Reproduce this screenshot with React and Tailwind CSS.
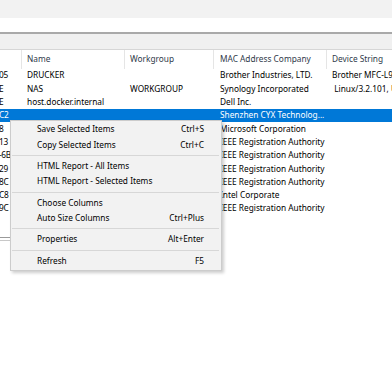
import React from "react";

const rows = [
  { a: "05", name: "DRUCKER", wg: "", mac: "Brother Industries, LTD.", dev: "Brother MFC-L9570CDW series" },
  { a: "E", name: "NAS", wg: "WORKGROUP", mac: "Synology Incorporated", dev: " Linux/3.2.101, UPnP/1.0, Portable SDK" },
  { a: "E", name: "host.docker.internal", wg: "", mac: "Dell Inc.", dev: "" },
  { a: "C2", name: "", wg: "", mac: "Shenzhen CYX Technolog...", dev: "", sel: true },
  { a: "8", name: "", wg: "", mac: "Microsoft Corporation", dev: "" },
  { a: "13", name: "", wg: "", mac: "IEEE Registration Authority", dev: "" },
  { a: "-6B", name: "", wg: "", mac: "IEEE Registration Authority", dev: "" },
  { a: "29", name: "", wg: "", mac: "IEEE Registration Authority", dev: "" },
  { a: "8C", name: "", wg: "", mac: "IEEE Registration Authority", dev: "" },
  { a: "C8", name: "", wg: "", mac: "Intel Corporate", dev: "" },
  { a: "9C", name: "", wg: "", mac: "IEEE Registration Authority", dev: "" },
];

const menu = [
  { t: "Save Selected Items", k: "Ctrl+S" },
  { t: "Copy Selected Items", k: "Ctrl+C" },
  "sep",
  { t: "HTML Report - All Items", k: "" },
  { t: "HTML Report - Selected Items", k: "" },
  "sep",
  { t: "Choose Columns", k: "" },
  { t: "Auto Size Columns", k: "Ctrl+Plus" },
  "sep",
  { t: "Properties", k: "Alt+Enter" },
  "sep",
  { t: "Refresh", k: "F5" },
];

export default function App() {
  return (
    <div
      className="relative w-[392px] h-[392px] overflow-hidden bg-white text-black"
      style={{ fontFamily: '"Noto Sans", "Segoe UI", sans-serif' }}
    >
      <div className="h-[18px] bg-[#f2f2f2]" />
      <div className="h-[14px] bg-white" />
      <div className="h-[2px] bg-[#a9a9a9]" />
      <div className="h-[16px] bg-[#f0f0f0] border-b border-[#d6d6d6]" />
      {/* header */}
      <div className="flex h-[19px] items-center text-[8.3px] text-[#2f3a4a] whitespace-nowrap">
        <div className="w-[22px] h-full border-r border-[#e5e5e5]" />
        <div className="w-[103px] h-full flex items-center pl-[5px] border-r border-[#e5e5e5]">Name</div>
        <div className="w-[89px] h-full flex items-center pl-[5px] border-r border-[#e5e5e5]">Workgroup</div>
        <div className="w-[113px] h-full flex items-center pl-[6px] border-r border-[#e5e5e5]">MAC Address Company</div>
        <div className="flex-1 h-full flex items-center pl-[5px]">Device String</div>
      </div>
      {/* rows */}
      <div className="flex flex-col text-[8.3px] whitespace-nowrap">
        {rows.map((r, i) => (
          <div
            key={i}
            className={
              "flex h-[13.3px] items-center " +
              (r.sel ? "bg-[#0078d7] text-white" : "text-black")
            }
          >
            <div className="w-[22px] overflow-hidden tracking-[-0.3px]">
              <span className="-ml-[1px]">{r.a}</span>
            </div>
            <div className="w-[103px] overflow-hidden pl-[5px]">{r.name}</div>
            <div className="w-[89px] overflow-hidden pl-[5px]">{r.wg}</div>
            <div className="w-[113px] overflow-hidden pl-[6px]">{r.mac}</div>
            <div className="flex-1 overflow-hidden pl-[5px] whitespace-pre">{r.dev}</div>
          </div>
        ))}
      </div>
      {/* list bottom edge, mostly hidden behind the menu */}
      <div className="mt-[22px] w-[12px] flex flex-col gap-[2px]">
        <div className="h-px bg-[#9a9a9a]" />
        <div className="h-px bg-[#c8c8c8]" />
      </div>

      {/* context menu */}
      <div className="absolute left-[10px] top-[120px] w-[212px] bg-[#f2f2f2] border border-[#cccccc] shadow-[2px_2px_3px_rgba(0,0,0,0.2)] pt-[1px] pb-[2px] text-[8.3px] text-black whitespace-nowrap">
        {menu.map((m, i) =>
          m === "sep" ? (
            <div key={i} className="h-[6px] flex items-center pl-[1px] pr-[2px]">
              <div className="h-px w-full bg-[#d7d7d7]" />
            </div>
          ) : (
            <div key={i} className="h-[15.3px] flex items-center justify-between pl-[26px] pr-[17px]">
              <span>{m.t}</span>
              <span>{m.k}</span>
            </div>
          )
        )}
      </div>
    </div>
  );
}
